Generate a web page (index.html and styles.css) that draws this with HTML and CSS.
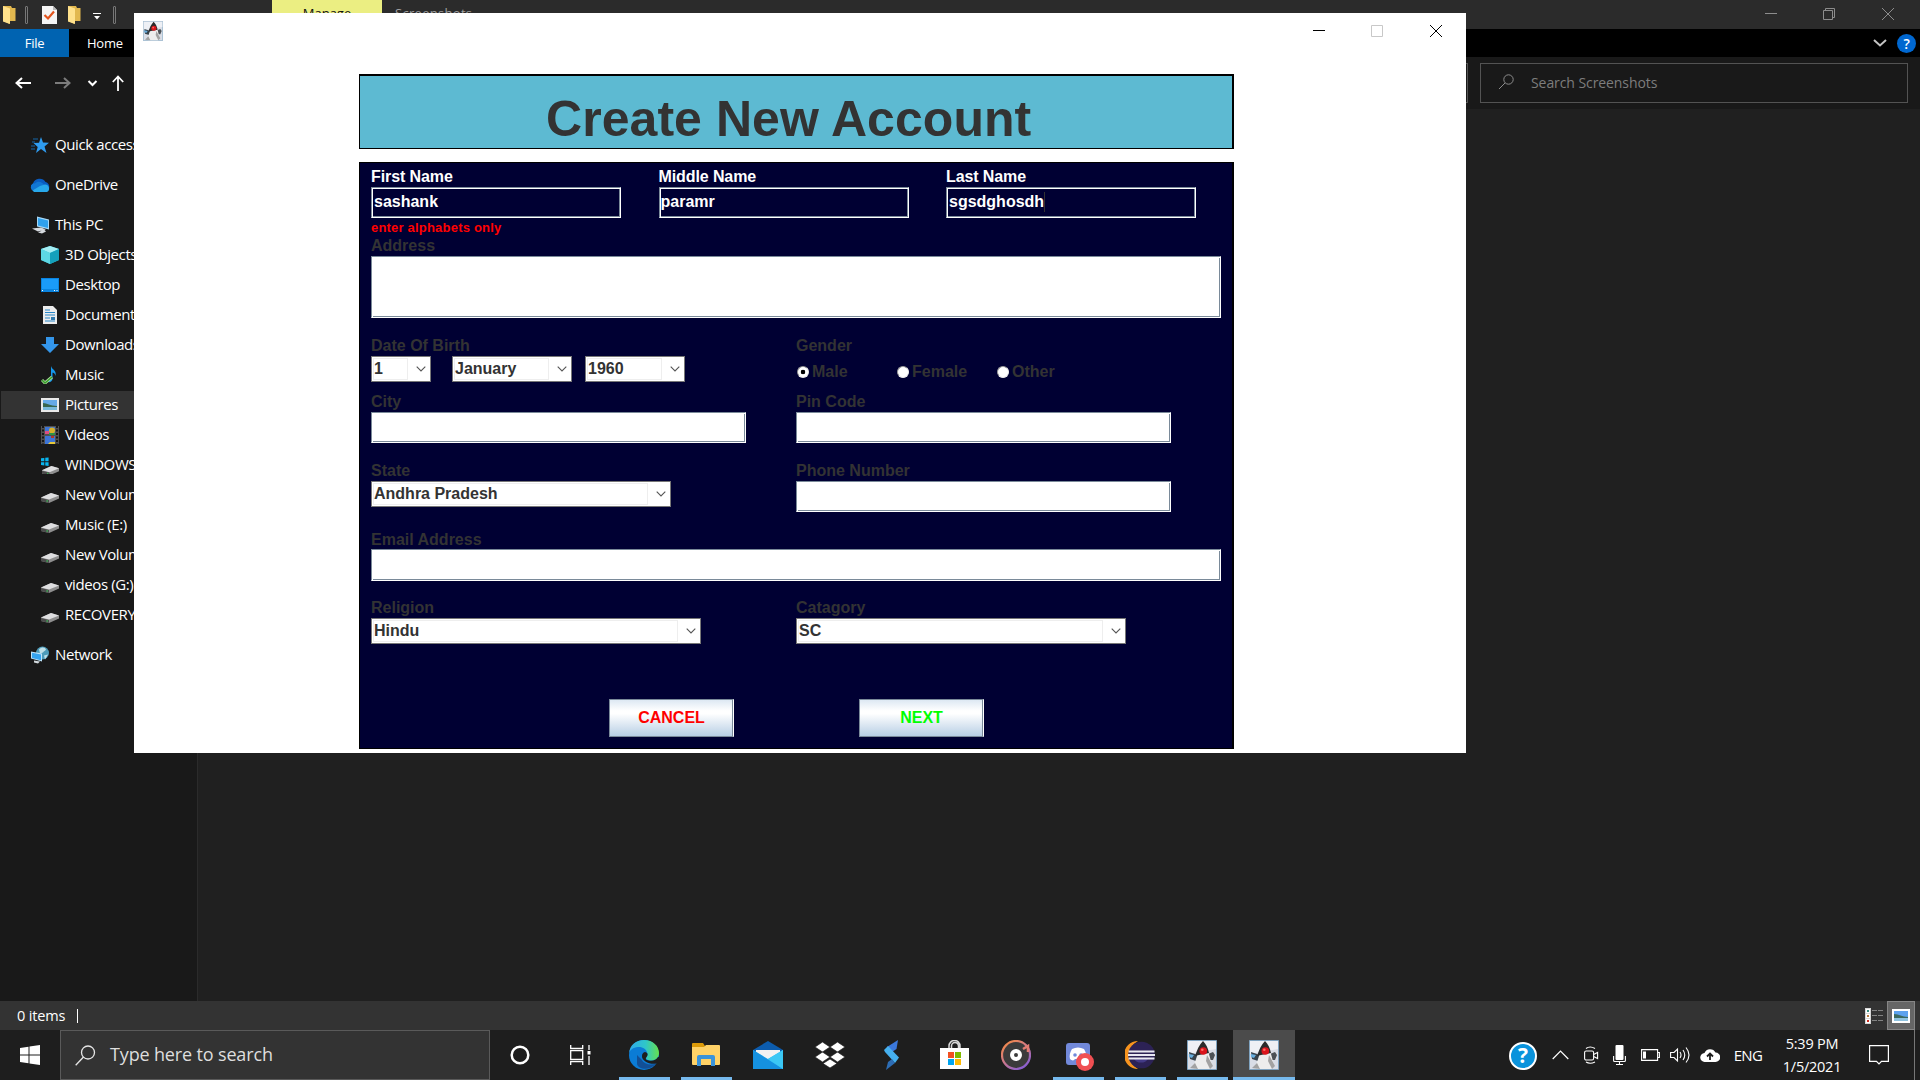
FILE: index.html
```html
<!DOCTYPE html>
<html lang="en">
<head>
<meta charset="utf-8">
<title>Create New Account</title>
<link rel="stylesheet" href="styles.css">
</head>
<body>
<svg class="sprite" aria-hidden="true">
  <symbol id="drive" viewBox="0 0 18 10"><path d="M0 4.5 10 0l8 2.5v3L8 10 0 8z" fill="#8e8e8e"/><path d="M0 4.5 10 0l8 2.5L8 6.6z" fill="#dedee0"/><path d="M0 5 8 7v3L0 8z" fill="#4b4b4b"/><path d="M5.5 7.3h1.3v1.4H5.5z" fill="#3fc35a"/></symbol>
  <symbol id="duke" viewBox="0 0 30 30"><path d="M.5.5h29v29H.5z" fill="#d9dde6" stroke="#7fa3c0"/><path d="M1 1h28v8L1 14z" fill="#eef0f5"/><path d="M2 12l6 2 4 2-3 5-6-2z" fill="#38434c"/><path d="M2 14l5 1-2 3-3-1z" fill="#68aede"/><path d="M21 14l5-2 2 3-2 5-4 0z" fill="#4c5156"/><path d="M16 1c4 3 5 8 6 13l3 11-2 4H8l-1-4 3-9c1-6 2-11 6-15z" fill="#ededed"/><path d="M16 1c3 3 5 7 6 12l-10 2-4 1c2-6 4-11 8-15z" fill="#2b2b2b"/><path d="M20 15l6 11-3 3-4-8zM8 23l-5 5 8 1z" fill="#a2a2a2"/><circle cx="16.300" cy="11" r="3.800" fill="#d9141b"/><circle cx="15.300" cy="9.800" r="1.300" fill="#ff6b62"/></symbol>
  <symbol id="chev" viewBox="0 0 10 6"><path d="M.7.7 5 5 9.300.7" fill="none" stroke="#555" stroke-width="1.100"/></symbol>
  <symbol id="folder" viewBox="0 0 13 18"><path d="M0 0h8l1 2h3.500v13l-6 0V18L0 15z" fill="#e2b84f"/><path d="M0 0l7 2.500V18L0 15.500z" fill="#ffe18c"/></symbol>
</svg>

<div class="desktop">
  <div class="explorer">
    <div class="xp-title">
      <div class="quickbar">
        <svg class="q-folder" width="13" height="18"><use href="#folder"/></svg>
        <i class="q-sep"></i>
        <svg class="q-check" width="15" height="18" viewBox="0 0 15 18"><path d="M0 0h11l4 4v14H0z" fill="#f4f4f4"/><path d="M11 0v4h4z" fill="#b9b9b9"/><path d="M2.500 9l3.500 3.500 6-7" fill="none" stroke="#e2531c" stroke-width="2.200"/></svg>
        <svg class="q-folder2" width="13" height="18"><use href="#folder"/></svg>
        <svg class="q-drop" width="8" height="7" viewBox="0 0 8 7"><path d="M0 .5h8" stroke="#fff"/><path d="M1 3h6L4 6.500z" fill="#fff"/></svg>
        <i class="q-sep"></i>
      </div>
      <div class="manage"><span>Manage</span></div>
      <span class="wtitle">Screenshots</span>
      <div class="winctl dim">
        <svg viewBox="0 0 12 12"><path d="M0 5.500h12" stroke="currentColor"/></svg>
        <svg viewBox="0 0 12 12"><path d="M.5 2.500h9v9h-9zM2.500 2.500v-2h9v9h-2" fill="none" stroke="currentColor"/></svg>
        <svg viewBox="0 0 12 12"><path d="M0 0l12 12M12 0L0 12" stroke="currentColor"/></svg>
      </div>
    </div>
    <div class="ribbon">
      <span class="file">File</span><span class="home">Home</span>
      <svg class="rib-chev" width="14" height="8" viewBox="0 0 14 8"><path d="M1 1l6 5.500L13 1" fill="none" stroke="#c4c4c4" stroke-width="2"/></svg>
      <span class="rib-help">?</span>
    </div>
    <div class="navbar">
      <svg class="arrows" width="112" height="18" viewBox="0 0 112 18">
        <g fill="none" stroke="#fff" stroke-width="2"><path d="M16 9h15M22 4l-5.500 5 5.500 5"/><path d="M55 9h15M64 4l5.500 5-5.500 5" stroke="#7c7c7c"/><path d="M88.500 7l4 4 4-4"/></g>
      </svg>
      <svg class="up" width="12" height="16" viewBox="0 0 12 16"><path d="M6 1.500V16M.8 7L6 1.500 11.200 7" fill="none" stroke="#fff" stroke-width="1.800"/></svg>
      <div class="addr"></div>
      <div class="search">
        <svg width="16" height="16" viewBox="0 0 16 16"><path d="M1 15l6-6" stroke="#8c8c8c"/><circle cx="10.500" cy="5.500" r="4.700" fill="none" stroke="#8c8c8c"/></svg>
        <span>Search Screenshots</span>
      </div>
    </div>
    <div class="body">
      <div class="tree">
        <div class="node top"><svg viewBox="0 0 18 16"><path d="M10 0l2 5.500 6 .3-4.500 3.700L15.500 16 10 12l-5 4 1.700-6L2.500 6l5.500-.2z" fill="#2f9cf0"/><path d="M2 2h5M1 5h3M0 9h4M0 12h4" stroke="#1566a8"/></svg><span>Quick access</span></div>
        <div class="node top cloud"><svg viewBox="0 0 20 14"><path d="M4 13a4 4 0 0 1-1-7.500A7 7 0 0 1 15.500 4 5 5 0 0 1 17 13z" fill="#0a5cc0"/><path d="M5 5.500C8 2 12 4 16 8l-9 5H4a4 4 0 0 1-1-7.500z" fill="#1176d3"/><path d="M2.500 12.500L10 8l5-1.500a4 4 0 0 1 2 7.500H4z" fill="#28a8ea"/></svg><span>OneDrive</span></div>
        <div class="node top pc"><svg viewBox="0 0 18 17"><path d="M6 0l12 3v10L6 10z" fill="#a7d8f7"/><path d="M7 1.500l10 2.500v7.500L7 9z" fill="#2fa1ee"/><path d="M1 12l9-1 5 2-8 2zM7 16l6-3 2 2-4 2z" fill="#d5d9de"/></svg><span>This PC</span></div>
        <div class="node"><svg viewBox="0 0 18 18"><path d="M9 0l9 3v11l-9 4-9-4V3z" fill="#35c2d6"/><path d="M9 0l9 3-9 4-9-4z" fill="#a4eef4"/><path d="M0 3l9 4v11l-9-4z" fill="#5dd7e5"/><path d="M9 7l9-4v11l-9 4z" fill="#14a0bb"/></svg><span>3D Objects</span></div>
        <div class="node"><svg viewBox="0 0 18 14"><path d="M0 0h18v14H0z" fill="#0a84e0"/><path d="M1 1h16v10H1z" fill="#1a9bfa"/><path d="M1 12.500h1M13 12.500h1M15.500 12.500h1" stroke="#fff"/></svg><span>Desktop</span></div>
        <div class="node"><svg viewBox="0 0 18 18"><path d="M2 0h10l4 4v14H2z" fill="#ececec"/><path d="M4 4h5M4 6.500h10M4 9h10M4 12h5M4 15h10" stroke="#2887c9"/><path d="M10 11h4v3h-4z" fill="#317aae"/></svg><span>Documents</span></div>
        <div class="node"><svg viewBox="0 0 18 16"><path d="M5 0h8v7h5l-9 9-9-9h5z" fill="#3496ea"/></svg><span>Downloads</span></div>
        <div class="node"><svg viewBox="0 0 18 18"><path d="M10 0c1 4 6 4 4.500 10-.5-3-2-3-3-3.500V13c0 3-5 4.500-5 1.500 0-2 2-3 3.500-2.500z" fill="#1598ec"/><path d="M1 14l3 3 7-6" fill="none" stroke="#a9dc9a" stroke-width="3"/><path d="M1 14l3 3 7-6" fill="none" stroke="#3a9a2c" stroke-width="1.500"/></svg><span>Music</span></div>
        <div class="node sel"><svg viewBox="0 0 18 14"><path d="M0 0h18v14H0z" fill="#e9e9e9"/><path d="M2 2h14v10H2z" fill="#66aae8"/><path d="M2 5c4 0 7 3 14 3v1H2z" fill="#38664f"/><path d="M2 9h14v3H2z" fill="#79b9db"/></svg><span>Pictures</span></div>
        <div class="node"><svg viewBox="0 0 18 18"><path d="M0 0h18v18H0z" fill="#505050"/><path d="M4 1h10v7H4zM4 10h10v8H4z" fill="#3d75d6"/><path d="M2 0v18M16 0v18" stroke="#161616" stroke-width="2" stroke-dasharray="2 1.500"/><circle cx="11" cy="4.500" r="3" fill="#d6b02a"/><path d="M4 5h4v3H4z" fill="#dc4e83"/><path d="M8 7h6v2H8z" fill="#2f9444"/><path d="M9 16h5v2H7z" fill="#e7c83b"/><path d="M10 10h3v2h-3z" fill="#b23827"/></svg><span>Videos</span></div>
        <div class="node"><svg viewBox="0 0 19 16"><path d="M0 1l3.500-.5v3.500H0zM4.500.4L8 0v4H4.500zM0 5h3.500v3.500L0 8zM4.500 5H8v4l-3.500-.4z" fill="#08b5ef"/><svg x="1" y="5" width="18" height="10"><use href="#drive"/></svg></svg><span>WINDOWS (C:)</span></div>
        <div class="node dr"><svg><use href="#drive"/></svg><span>New Volume (D:)</span></div>
        <div class="node dr"><svg><use href="#drive"/></svg><span>Music (E:)</span></div>
        <div class="node dr"><svg><use href="#drive"/></svg><span>New Volume (F:)</span></div>
        <div class="node dr"><svg><use href="#drive"/></svg><span>videos (G:)</span></div>
        <div class="node dr"><svg><use href="#drive"/></svg><span>RECOVERY (H:)</span></div>
        <div class="node top net"><svg viewBox="0 0 18 17"><circle cx="11.500" cy="6.500" r="6.500" fill="#4d9cba"/><path d="M8 3c3-3 6-2 7 0-1 2-2 1-3 3l-3 1zM13 9l4-1-3 5z" fill="#bfe0e8"/><path d="M0 5l11 2v8L0 12z" fill="#bfe4fa"/><path d="M1 6.200l9 1.700v5.900l-9-2.200z" fill="#35a4f0"/><path d="M3 14l6 1-2 2-4-1z" fill="#d3dade"/></svg><span>Network</span></div>
      </div>
      <div class="files"></div>
    </div>
    <div class="status">
      <span class="count">0 items</span><i class="bar"></i>
      <svg class="details" width="18" height="16" viewBox="0 0 18 16"><path d="M0 0h6v16H0z" fill="#d8d8d8"/><path d="M1 1h4v4H1zM1 6h4v4H1zM1 11h4v4H1z" fill="#fff"/><path d="M2 2h2v2H2z" fill="#3b8d80"/><path d="M2 7h2v2H2z" fill="#b97b3e"/><path d="M2 12h2v2H2z" fill="#cc2b1d"/><path d="M7 2.500h5M13 2.500h5M7 7.500h5M13 7.500h5M7 12.500h5M13 12.500h5" stroke="#838383"/></svg>
      <span class="thumbs"><svg width="18" height="14" viewBox="0 0 18 14"><path d="M0 0h18v14H0z" fill="#fff"/><path d="M2 2h14v10H2z" fill="#5da2ee"/><path d="M2 5c5 0 8 3 14 3v1H2z" fill="#3c6a60"/><path d="M2 9h14v3H2z" fill="#8fc3e0"/></svg></span>
    </div>
  </div>

  <div class="taskbar">
    <div class="start"><svg width="20" height="20" viewBox="0 0 20 20"><path d="M0 3l8.500-1.300v7.800H0zM9.500 1.500L20 0v9.500H9.500zM0 10.500h8.500v7.800L0 17zM9.500 10.500H20V20L9.500 18.500z" fill="#fff"/></svg></div>
    <div class="tb-search"><svg width="21" height="21" viewBox="0 0 21 21"><g fill="none" stroke="#e6e6e6" stroke-width="1.300"><circle cx="13" cy="7.500" r="6.500"/><path d="M8.500 12L.7 20.300"/></g></svg><span>Type here to search</span></div>
    <div class="cell c1"><svg width="20" height="20" viewBox="0 0 20 20"><circle cx="10" cy="10" r="8.300" fill="none" stroke="#fff" stroke-width="2.500"/></svg></div>
    <div class="cell c2"><svg width="21" height="20" viewBox="0 0 21 20"><path d="M.7 0v3.500h12V0M.7 20v-3.500h12V20M.7 5.700h12v8.600H.7zM19 0v5M19 11v9" fill="none" stroke="#fff" stroke-width="1.300"/><path d="M17.500 6h3v3.500h-3z" fill="#fff"/></svg></div>
    <div class="cell on"><svg width="30" height="30" viewBox="0 0 30 30"><defs><linearGradient id="eg" x1="0" x2="1"><stop offset="0" stop-color="#2fa9ec"/><stop offset=".55" stop-color="#2fc6c9"/><stop offset="1" stop-color="#66e04d"/></linearGradient></defs><circle cx="15" cy="15" r="15" fill="#0b7cd6"/><path d="M8 24c1 5 12 8 19-.5-5 2-12 1-14.500-4L8 15z" fill="#124f96"/><path d="M0 13C1 5 7 0 15 0c9 0 15 6 15 13 0 5-4 7.500-8 7.500-3 0-5-1-5-2.500s1.500-1.500 1.500-4C18 9 13 6.500 9 7 4 7.500 1 10 0 13z" fill="url(#eg)"/><path d="M17 18c-1 2 2 2.700 5 2.700 3 0 6-1.500 7-3.700l1 0v6l-2.500.5C21 25 12.500 21 13 16c0-2 1-3.500 3-4 2 .5 2.600 1.300 2.600 2.500 0 1.800-1.200 2.200-1.600 3.500z" fill="#1e1e1e"/></svg></div>
    <div class="cell on"><svg width="28" height="24" viewBox="0 0 28 24"><path d="M0 1q0-1 1-1h10l2 3v4H0z" fill="#dd9b09"/><path d="M0 4h12l2-2h13q1 0 1 1v18q0 1-1 1H1q-1 0-1-1z" fill="#ffd267"/><path d="M5 23V14q0-2 2-2h14q2 0 2 2v9h-4v-7H9v7z" fill="#3a93da"/></svg></div>
    <div class="cell"><svg width="30" height="28" viewBox="0 0 30 28"><path d="M0 9L15 0l15 9v9H0z" fill="#0c5cae"/><path d="M3 9h24v12H3z" fill="#f2f2f2"/><path d="M0 9l15 9L30 9v19H0z" fill="#30b7f2"/><path d="M0 9l30 19H0z" fill="#1591e0"/><path d="M15 18L30 9v19z" fill="#3bc8f5"/></svg></div>
    <div class="cell"><svg width="30" height="26" viewBox="0 0 30 26"><path d="M7.500 0L15 5 7.500 10 0 5zM22.500 0L30 5l-7.500 5L15 5zM7.500 10l7.500 5-7.500 5L0 15zM22.500 10l7.500 5-7.500 5-7.500-5zM15 17l7 4.500-7 4.500-7-4.500z" fill="#fff" stroke="#1e1e1e" stroke-width=".7"/></svg></div>
    <div class="cell"><svg width="16" height="30" viewBox="0 0 16 30"><path d="M14 0L12.500 9 8 12 3 7z" fill="#3b78dc"/><path d="M0 10L4 6l11 11.500-4 5.500L1 12z" fill="#46b0ee"/><path d="M2 30l2-8 4-3 3 4z" fill="#2d6db4"/></svg></div>
    <div class="cell"><svg width="29" height="30" viewBox="0 0 29 30"><path d="M9 8V6a5.500 5.500 0 0 1 11 0v2M11.500 8V6a3.500 3.500 0 0 1 7 0v2" fill="none" stroke="#d9d9d9" stroke-width="1.500"/><path d="M0 8h29v21H0z" fill="#fff"/><path d="M8 12h6v6H8z" fill="#f25022"/><path d="M15 12h6v6h-6z" fill="#7fba00"/><path d="M8 19h6v6H8z" fill="#00a4ef"/><path d="M15 19h6v6h-6z" fill="#ffb900"/></svg></div>
    <div class="cell"><svg width="30" height="30" viewBox="0 0 30 30"><defs><linearGradient id="gr" x1="0" y1="0" x2=".7" y2="1"><stop offset="0" stop-color="#f88b3c"/><stop offset=".5" stop-color="#d17a86"/><stop offset="1" stop-color="#8a5fd0"/></linearGradient></defs><circle cx="15" cy="15" r="14" fill="#3b3b3b" stroke="url(#gr)" stroke-width="2.200"/><path d="M22 9l5-3v6" fill="none" stroke="#e37c72" stroke-width="2.500"/><circle cx="15" cy="15" r="4" fill="none" stroke="#fff" stroke-width="4"/></svg></div>
    <div class="cell on"><svg class="disc" width="28" height="28" viewBox="0 0 28 28"><rect width="24" height="22" rx="3" fill="#7289da"/><path d="M6 6c4-2 8-2 12 0 2 3 3 7 2 10-2 1-3 2-4 1l-1-1H9l-1 1c-1 1-3 0-4-1-1-3 0-7 2-10z" fill="#fff"/><circle cx="9" cy="12" r="1.800" fill="#7289da"/><circle cx="15" cy="12" r="1.800" fill="#7289da"/><circle cx="19" cy="19" r="9" fill="#f04f52"/><circle cx="19" cy="19" r="4" fill="#fff"/></svg></div>
    <div class="cell on"><svg width="30" height="28" viewBox="0 0 30 28"><path d="M13 0a14 14 0 0 0 0 28A16 16 0 0 1 13 0z" fill="#f7941e"/><circle cx="16.500" cy="14" r="13.300" fill="#2c2255"/><path d="M9 18a8 7 0 0 0 14 0z" fill="#433a86"/><path d="M3.500 10.500h26M3 14h27M3.500 17.500h26" stroke="#e9e9f2" stroke-width="2"/></svg></div>
    <div class="cell on"><svg width="30" height="30"><use href="#duke"/></svg></div>
    <div class="cell on active"><svg width="30" height="30"><use href="#duke"/></svg></div>
    <div class="tray">
      <div class="t-help"><span>?</span></div>
      <div class="t-up"><svg width="17" height="10" viewBox="0 0 17 10"><path d="M.7 9l7.800-8 7.800 8" fill="none" stroke="#fff" stroke-width="1.200"/></svg></div>
      <div class="t-meet"><svg width="15" height="18" viewBox="0 0 15 18"><g fill="none" stroke="#fff" stroke-width="1.100"><rect x=".6" y="5" width="9" height="9" rx="1.500"/><path d="M9.600 8.500l4-2v6l-4-2M2 2.500q4-3 9 0M2 16q4 2.500 9 0"/></g></svg></div>
      <div class="t-mic"><svg width="13" height="20" viewBox="0 0 13 20"><rect x="2.500" width="8" height="15" rx="1" fill="#fff"/><path d="M.6 11v4.500q0 1 1 1h9.800q1 0 1-1V11M6.500 16.500v3M3 19.500h7" fill="none" stroke="#fff" stroke-width="1.100"/></svg></div>
      <div class="t-bat"><svg width="19" height="12" viewBox="0 0 19 12"><path d="M.6.6h16v10.800H.6zM17 3.500h1.400v5H17" fill="none" stroke="#fff" stroke-width="1.100"/><path d="M2 2.500h3v7H2z" fill="#fff"/></svg></div>
      <div class="t-vol"><svg width="21" height="18" viewBox="0 0 21 18"><path d="M.6 6.500H4L7.500 3v12L4 11.500H.6zM10 6q2 3 0 6M13 4q3.500 5 0 10M16 1.500q6 7.500 0 15" fill="none" stroke="#fff" stroke-width="1.100"/></svg></div>
      <div class="t-cloud"><svg width="20" height="14" viewBox="0 0 20 14"><path d="M5 14a4.500 4.500 0 0 1-.5-9A6 6 0 0 1 15.500 4.500 4.700 4.700 0 0 1 15.500 14z" fill="#fff"/><path d="M10 12V6M7 8.500l3-3 3 3" fill="none" stroke="#1e1e1e" stroke-width="1.800"/></svg></div>
      <div class="t-lang">ENG</div>
      <div class="t-clock"><span>5:39 PM</span><span class="date">1/5/2021</span></div>
      <div class="t-note"><svg width="20" height="20" viewBox="0 0 20 20"><path d="M.6.6h18.800v15.800H12.500L10 19l-2.500-2.600H.6z" fill="none" stroke="#fff" stroke-width="1.200"/></svg></div>
      <i class="peek"></i>
    </div>
  </div>

  <div class="dialog">
    <div class="dlg-title">
      <svg class="dlg-ico" width="20" height="20"><use href="#duke"/></svg>
      <div class="winctl">
        <svg viewBox="0 0 12 12"><path d="M0 5.500h12" stroke="#000"/></svg>
        <svg viewBox="0 0 12 12"><path d="M.5.5h11v11H.5z" fill="none" stroke="#c8c8c8"/></svg>
        <svg viewBox="0 0 12 12"><path d="M0 0l12 12M12 0L0 12" stroke="#000"/></svg>
      </div>
    </div>
    <h1 class="banner">Create New Account</h1>
    <div class="form">
      <div class="row r1">
        <div class="field"><label class="lit">First Name</label><div class="input dark">sashank</div><span class="error">enter alphabets only</span></div>
        <div class="field"><label class="lit">Middle Name</label><div class="input dark tight">paramr</div></div>
        <div class="field"><label class="lit">Last Name</label><div class="input dark">sgsdghosdh<i class="caret"></i></div></div>
      </div>
      <div class="row r2">
        <div class="field wide"><label>Address</label><div class="input area"></div></div>
      </div>
      <div class="row half r3">
        <div class="field"><label>Date Of Birth</label>
          <div class="combos">
            <div class="combo day"><span>1</span><svg><use href="#chev"/></svg></div>
            <div class="combo month"><span>January</span><svg><use href="#chev"/></svg></div>
            <div class="combo year"><span>1960</span><svg><use href="#chev"/></svg></div>
          </div>
        </div>
        <div class="field"><label>Gender</label>
          <div class="radios"><span class="radio"><i class="dot checked"></i>Male</span><span class="radio"><i class="dot"></i>Female</span><span class="radio"><i class="dot"></i>Other</span></div>
        </div>
      </div>
      <div class="row half r4">
        <div class="field"><label>City</label><div class="input mid"></div></div>
        <div class="field"><label>Pin Code</label><div class="input mid"></div></div>
      </div>
      <div class="row half r4">
        <div class="field"><label>State</label><div class="combo state"><span>Andhra Pradesh</span><svg><use href="#chev"/></svg></div></div>
        <div class="field"><label>Phone Number</label><div class="input mid"></div></div>
      </div>
      <div class="row r6">
        <div class="field wide"><label>Email Address</label><div class="input email"></div></div>
      </div>
      <div class="row half r7">
        <div class="field"><label>Religion</label><div class="combo pick"><span>Hindu</span><svg><use href="#chev"/></svg></div></div>
        <div class="field"><label>Catagory</label><div class="combo pick"><span>SC</span><svg><use href="#chev"/></svg></div></div>
      </div>
      <div class="actions"><div class="btn cancel">CANCEL</div><div class="btn next">NEXT</div></div>
    </div>
  </div>
</div>
</body>
</html>
```
FILE: styles.css
```css
* { box-sizing: border-box; }
body { margin: 0; width: 1920px; height: 1080px; overflow: hidden; background: #202020; font-family: "Open Sans", "Noto Sans", sans-serif; color: #fff; }
.sprite { display: none; }
svg { flex: none; display: block; }
.desktop { position: relative; display: flex; flex-direction: column; width: 1920px; height: 1080px; }
.explorer { display: flex; flex-direction: column; height: 1030px; }

/* explorer title bar */
.xp-title { display: flex; height: 29px; background: #2b2b2b; }
.quickbar { display: flex; align-items: center; width: 272px; padding: 1px 0 0 3px; }
.q-sep { width: 3px; height: 18px; border: 1px solid #777; border-radius: 1px; }
.q-folder { margin-right: 9px; }
.q-check { margin-left: 14px; }
.q-folder2 { margin-left: 11px; }
.q-drop { margin: 2px 12px 0 12px; }
.manage { width: 110px; background: #ebee82; color: #111; text-align: center; font-size: 13px; line-height: 18px; padding-top: 4px; }
.wtitle { margin-left: 13px; padding-top: 4px; font-size: 13px; line-height: 18px; color: #a0a0a0; letter-spacing: .3px; }
.winctl { display: flex; margin-left: auto; }
.winctl svg { width: 12px; height: 12px; margin: 8px 23px 0 23.500px; }
.winctl.dim { color: #8d8d8d; padding-right: 3px; }
.winctl svg:nth-child(2) { margin-left: 23px; margin-right: 23.500px; }

/* ribbon and navigation */
.ribbon { display: flex; align-items: center; height: 28px; background: #000; font-size: 13px; letter-spacing: -.25px; }
.file { width: 69px; height: 28px; line-height: 28px; background: #0063b1; text-align: center; }
.home { margin-left: 18px; }
.rib-chev { margin: 0 10px 0 auto; }
.rib-help { width: 19px; height: 19px; margin-right: 4px; border-radius: 50%; background: #0067d0; text-align: center; font-size: 14px; font-weight: 600; line-height: 19px; }
.navbar { display: flex; align-items: center; height: 52px; background: #191919; }
.arrows { margin-bottom: 1px; }
.addr { width: 1304px; height: 40px; margin-left: 40px; border: 1px solid #535353; }
.search { display: flex; align-items: center; width: 428px; height: 40px; margin-left: 12px; padding: 0 0 2px 17px; border: 1px solid #535353; color: #7d7d7d; font-size: 14px; letter-spacing: -.08px; }
.search span { margin-left: 17px; }

/* navigation tree */
.body { display: flex; height: 892px; }
.tree { display: flex; flex-direction: column; width: 198px; padding-top: 21px; background: #191919; border-right: 1px solid #2b2b2b; }
.node { display: flex; align-items: center; height: 28px; margin: 1px 0 1px 1px; padding-left: 40px; font-size: 15px; letter-spacing: -.4px; white-space: nowrap; }
.node svg { width: 18px; height: 18px; margin-right: 6px; }
.node span { margin-top: -2px; }
.node.top { margin-bottom: 11px; padding-left: 30px; }
.node.cloud { padding-left: 29px; }
.node.cloud svg { width: 20px; margin-right: 5px; }
.node.pc { margin-bottom: 1px; }
.node.net { margin-top: 11px; }
.node.sel { background: #333; }
.node.dr svg { height: 10px; margin-top: 6px; }
.files { flex: 1; background: #202020; }
.status { display: flex; align-items: center; height: 29px; background: #333; padding-left: 17px; font-size: 14.500px; letter-spacing: -.15px; }
.count { width: 60px; }
.bar { width: 1px; height: 14px; background: #fff; }
.details { margin-left: auto; }
.thumbs { display: flex; align-items: center; justify-content: center; width: 28px; height: 29px; margin: 0 5px 0 4px; background: #666; border: 1px solid #868686; }

/* taskbar */
.taskbar { display: flex; height: 50px; background: #1e1e1e; }
.start { width: 60px; padding: 15px 20px; }
.tb-search { display: flex; align-items: center; width: 430px; background: #333; border: 1px solid #5a5a5a; padding-left: 14px; color: #dedede; font-size: 18px; letter-spacing: -.15px; }
.tb-search span { margin: -2px 0 0 14px; }
.cell { display: flex; align-items: center; justify-content: center; width: 62px; }
.cell.c1 { width: 60px; }
.cell.c2 { width: 63px; padding-right: 3px; }
.cell.on { background: linear-gradient(#76b9ed, #76b9ed) center bottom / 51px 3px no-repeat; }
.cell.active { background: linear-gradient(#76b9ed, #76b9ed) center bottom / 62px 3px no-repeat, #4b4b4b; }
.disc { margin: 3px 0 0 3px; }
.tray { display: flex; margin-left: auto; width: 417px; align-items: center; }
.tray div { display: flex; align-items: center; justify-content: center; }
.t-help { width: 40px; }
.t-help span { width: 28px; height: 28px; margin-top: 2px; border: 2.500px solid #fff; border-radius: 50%; background: #0a93dc; text-align: center; font-size: 21px; font-weight: 700; line-height: 22px; }
.t-up { width: 34px; }
.t-meet { width: 28px; }
.t-mic { width: 29px; }
.t-bat { width: 33px; }
.t-vol { width: 26px; }
.t-cloud { width: 34px; }
.tray .t-lang { width: 42px; font-size: 15px; letter-spacing: -.6px; }
.tray .t-clock { flex-direction: column; width: 86px; margin-top: -1px; font-size: 14.500px; line-height: 23px; letter-spacing: -.25px; }
.t-note { width: 48px; }
.peek { align-self: stretch; width: 1px; margin-left: 11px; background: #777; }

/* account dialog */
.dialog { position: absolute; left: 134px; top: 13px; width: 1332px; height: 740px; background: #fff; font-family: "Liberation Sans", Arial, sans-serif; font-weight: 700; font-size: 16px; color: #333; }
.dlg-title { display: flex; height: 61px; padding-right: 1px; }
.dlg-ico { margin: 8px 0 0 9px; }
.dlg-title .winctl svg { margin-top: 12px; }
.banner { width: 875px; height: 75px; margin: 0 0 13px 225px; padding: 15px 0 0 186px; border: solid #000; border-width: 2px 2px 1px 1px; background: #5dbad2; font-size: 50px; line-height: 56px; letter-spacing: .05px; white-space: nowrap; }
.form { width: 875px; height: 587px; margin-left: 225px; padding: 4px 0 0 11px; border: solid #000; border-width: 1px 2px 1px 1px; background: #000033; }
.row { display: flex; }
.r1 { height: 69px; gap: 37.500px; }
.r1 .field { width: 250px; }
.r2 { height: 100px; }
.r3 { height: 56px; }
.r4 { height: 69px; }
.r6 { height: 68px; }
.r7 { height: 101px; }
.half .field { width: 425px; }
.r6 label { height: 19px; }
label { display: block; height: 20px; line-height: 20px; white-space: nowrap; }
.lit { color: #fff; letter-spacing: -.1px; }
.input { height: 31px; background: #fff; border: 1px solid #7a8a99; border-right-color: #fff; border-bottom-color: #fff; box-shadow: inset 1px 1px #fff, inset -1px -1px #7a8a99; }
.dark { display: flex; padding-left: 2px; background: #000033; color: #fff; line-height: 28px; }
.tight { padding-left: 1px; }
.caret { width: 1px; height: 20px; margin-top: 4px; background: #333; }
.error { display: block; color: #f00; font-size: 13px; line-height: 19px; letter-spacing: .2px; white-space: nowrap; }
.area { width: 850px; height: 62px; }
.mid { width: 375px; }
.email { width: 850px; height: 32px; }
.combos { display: flex; }
.combo { display: flex; align-items: center; height: 26px; padding: 0 4px 0 1px; background: #fff; border: 1px solid #777; line-height: 22px; }
.combo span { flex: 1; height: 22px; margin-right: 8px; border: 1px solid #eee; line-height: 19px; white-space: nowrap; }
.combo svg { width: 10px; height: 6px; }
.day { width: 60px; }
.month { width: 120px; margin-left: 21px; }
.year { width: 100px; margin-left: 13px; }
.state { width: 300px; }
.pick { width: 330px; }
.radios { display: flex; padding-top: 6px; }
.radio { display: flex; align-items: center; width: 100px; height: 20px; padding-left: 1px; }
.dot { width: 12px; height: 12px; margin-right: 3px; border-radius: 50%; background: #fff; border: 1px solid #999; border-right-color: #eee; border-bottom-color: #eee; }
.checked { background: radial-gradient(circle, #000 0 2px, #fff 2.600px); }
.actions { display: flex; gap: 125px; margin-left: 238px; }
.btn { width: 125px; height: 38px; border: 1px solid #7a8a99; border-right-color: #fff; box-shadow: inset -1px 0 #7a8a99; background: linear-gradient(#dde8f3, #fff 30%, #fff 38%, #b8cfe5); text-align: center; line-height: 35px; }
.cancel { color: #f00; }
.next { color: #0f0; }
```
